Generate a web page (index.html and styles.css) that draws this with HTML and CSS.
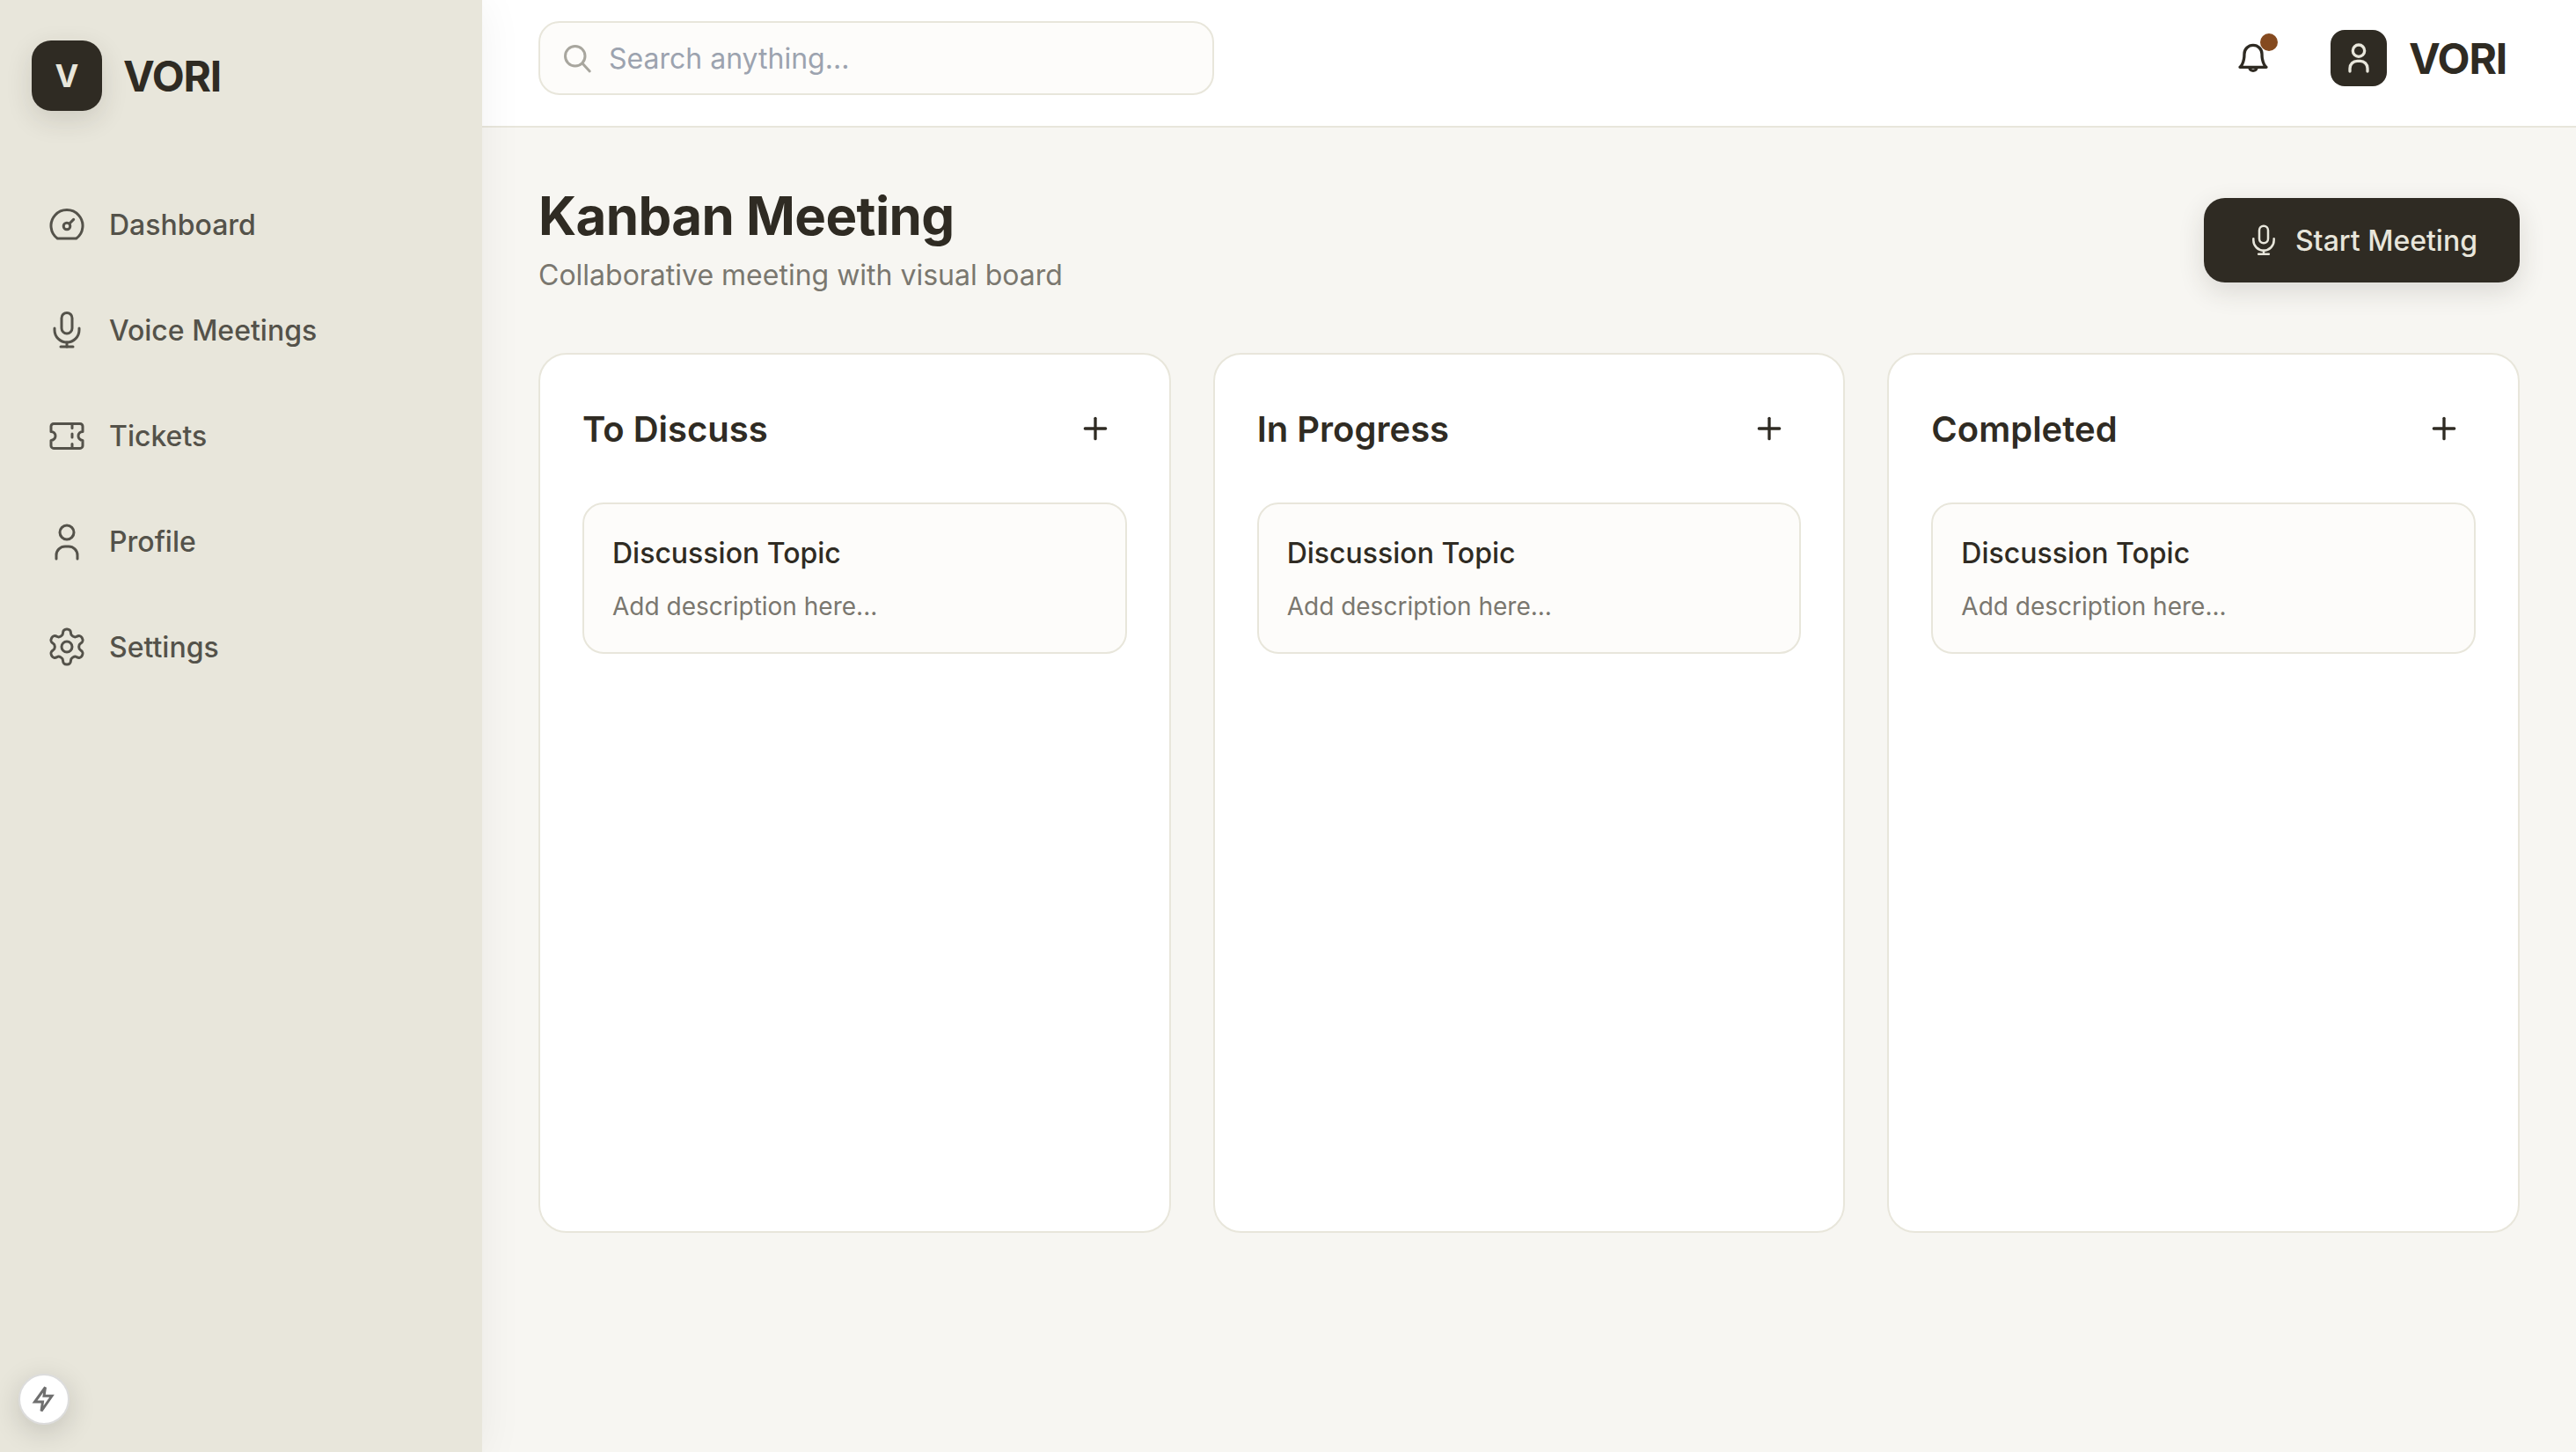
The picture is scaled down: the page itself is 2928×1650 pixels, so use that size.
FILE: index.html
```html
<!DOCTYPE html>
<html lang="en">
<head>
    <meta charset="UTF-8">
    <meta name="viewport" content="width=device-width, initial-scale=1.0">
    <title>Kanban Meeting</title>
    <link rel="stylesheet" href="styles.css">
</head>
<body>

    <aside class="sidebar">
        <div class="brand">
            <div class="brand-mark">V</div>
            <span class="brand-name">VORI</span>
        </div>
        <nav class="nav">
            <a class="nav-item" href="#">
                <svg class="nav-icon" viewBox="0 0 24 24"><path d="M6.67 20A9 9 0 1 1 17.33 20Z"/><circle cx="12" cy="13" r="1.9"/><path d="M13.4 11.6 15.8 9.2"/></svg>
                Dashboard
            </a>
            <a class="nav-item" href="#">
                <svg class="nav-icon" viewBox="0 0 24 24"><rect x="9" y="2.2" width="6" height="11.8" rx="3"/><path d="M5 11v1a7 7 0 0 0 14 0v-1"/><path d="M12 19v2.5"/><path d="M8.5 21.5h7"/></svg>
                Voice Meetings
            </a>
            <a class="nav-item" href="#">
                <svg class="nav-icon" viewBox="0 0 24 24"><path d="M4.5 5.2h15A1.5 1.5 0 0 1 21 6.700v3a2.500 2.500 0 0 0 0 5v3a1.500 1.500 0 0 1-1.500 1.500h-15A1.500 1.500 0 0 1 3 17.700v-3a2.500 2.500 0 0 0 0-5v-3a1.500 1.500 0 0 1 1.500-1.500Z"/><path d="M15 5.200v2.500"/><path d="M15 11v2"/><path d="M15 16.700v2.500"/></svg>
                Tickets
            </a>
            <a class="nav-item" href="#">
                <svg class="nav-icon" viewBox="0 0 24 24"><circle cx="12" cy="7" r="4"/><path d="M6 22v-2a5 5 0 0 1 5-5h2a5 5 0 0 1 5 5v2"/></svg>
                Profile
            </a>
            <a class="nav-item" href="#">
                <svg class="nav-icon" viewBox="0 0 24 24"><path d="M12.220 2h-.44a2 2 0 0 0-2 2v.18a2 2 0 0 1-1 1.730l-.43.25a2 2 0 0 1-2 0l-.15-.08a2 2 0 0 0-2.730.73l-.22.38a2 2 0 0 0 .73 2.730l.15.1a2 2 0 0 1 1 1.720v.51a2 2 0 0 1-1 1.740l-.15.09a2 2 0 0 0-.73 2.730l.22.38a2 2 0 0 0 2.730.73l.15-.08a2 2 0 0 1 2 0l.43.25a2 2 0 0 1 1 1.730V20a2 2 0 0 0 2 2h.44a2 2 0 0 0 2-2v-.18a2 2 0 0 1 1-1.730l.43-.25a2 2 0 0 1 2 0l.15.08a2 2 0 0 0 2.730-.73l.22-.39a2 2 0 0 0-.73-2.730l-.15-.08a2 2 0 0 1-1-1.740v-.5a2 2 0 0 1 1-1.740l.15-.09a2 2 0 0 0 .73-2.730l-.22-.38a2 2 0 0 0-2.730-.73l-.15.08a2 2 0 0 1-2 0l-.43-.25a2 2 0 0 1-1-1.730V4a2 2 0 0 0-2-2z"/><circle cx="12" cy="12" r="3"/></svg>
                Settings
            </a>
        </nav>
    </aside>

    <div class="dev-badge">
        <svg class="dev-icon" viewBox="0 0 24 24"><path d="M13 3 5 14h6l-1 7 8-11.500h-6z"/></svg>
    </div>

    <div class="page">
        <header class="topbar">
            <div class="search">
                <svg class="search-icon" viewBox="0 0 24 24"><circle cx="10.500" cy="10.500" r="7.500"/><path d="m16 16 5.500 6"/></svg>
                <span class="search-text">Search anything...</span>
            </div>
            <div class="topbar-right">
                <div class="bell">
                    <svg class="bell-icon" viewBox="0 0 24 24"><path d="M6 8a6 6 0 0 1 12 0c0 7 3 9 3 9H3s3-2 3-9"/><path d="M9.500 17.500a2.600 2.600 0 0 0 5 0"/></svg>
                    <span class="bell-dot"></span>
                </div>
                <div class="user">
                    <div class="avatar">
                        <svg class="avatar-icon" viewBox="0 0 24 24"><circle cx="12" cy="7" r="4"/><path d="M6 21v-2a5 5 0 0 1 5-5h2a5 5 0 0 1 5 5v2"/></svg>
                    </div>
                    <span class="user-name">VORI</span>
                </div>
            </div>
        </header>

        <main class="content">
            <div class="title-row">
                <div>
                    <h1>Kanban Meeting</h1>
                    <p class="subtitle">Collaborative meeting with visual board</p>
                </div>
                <button class="start-btn">
                    <svg class="start-icon" viewBox="0 0 24 24"><rect x="9" y="2.200" width="6" height="11.800" rx="3"/><path d="M5 11v1a7 7 0 0 0 14 0v-1"/><path d="M12 19v2.500"/><path d="M8.500 21.500h7"/></svg>
                    Start Meeting
                </button>
            </div>

            <section class="board">
                <div class="column">
                    <div class="column-head">
                        <h2>To Discuss</h2>
                        <button class="add-btn"><svg class="add-icon" viewBox="0 0 24 24"><path d="M5 12h14"/><path d="M12 5v14"/></svg></button>
                    </div>
                    <div class="topic">
                        <h3>Discussion Topic</h3>
                        <p>Add description here...</p>
                    </div>
                </div>
                <div class="column">
                    <div class="column-head">
                        <h2>In Progress</h2>
                        <button class="add-btn"><svg class="add-icon" viewBox="0 0 24 24"><path d="M5 12h14"/><path d="M12 5v14"/></svg></button>
                    </div>
                    <div class="topic">
                        <h3>Discussion Topic</h3>
                        <p>Add description here...</p>
                    </div>
                </div>
                <div class="column">
                    <div class="column-head">
                        <h2>Completed</h2>
                        <button class="add-btn"><svg class="add-icon" viewBox="0 0 24 24"><path d="M5 12h14"/><path d="M12 5v14"/></svg></button>
                    </div>
                    <div class="topic">
                        <h3>Discussion Topic</h3>
                        <p>Add description here...</p>
                    </div>
                </div>
            </section>
        </main>
    </div>

</body>
</html>
```

FILE: styles.css
```css
* {
    box-sizing: border-box;
}

html, body {
    height: 100%;
}

body {
    margin: 0;
    display: flex;
    overflow: hidden;
    font-family: Inter, "Liberation Sans", sans-serif;
    background-color: #f7f6f2;
    color: #2f2b23;
}

svg {
    fill: none;
    stroke: currentColor;
    stroke-width: 1.5;
    stroke-linecap: round;
    stroke-linejoin: round;
    flex-shrink: 0;
}

.sidebar {
    width: 548px;
    flex-shrink: 0;
    padding: 46px 24px 0 36px;
    background-color: #e8e6db;
    box-shadow: 0 4px 48px rgba(0, 0, 0, 0.06);
    position: relative;
    z-index: 2;
}

.brand {
    display: flex;
    align-items: center;
    gap: 24px;
}

.brand-mark {
    width: 80px;
    height: 80px;
    border-radius: 22px;
    display: flex;
    align-items: center;
    justify-content: center;
    background-color: #2f2b23;
    color: #e8e6db;
    font-size: 36px;
    font-weight: 700;
    box-shadow: 0 10px 30px rgba(47, 43, 35, 0.14);
}

.brand-name, .user-name {
    font-size: 48px;
    font-weight: 700;
    letter-spacing: -1.2px;
    color: #2f2b23;
}

.nav {
    display: flex;
    flex-direction: column;
    gap: 24px;
    margin-top: 81px;
    margin-left: -12px;
}

.nav-item {
    display: flex;
    align-items: center;
    gap: 24px;
    padding: 24px 28px;
    font-size: 32px;
    font-weight: 500;
    color: #54524a;
    text-decoration: none;
}

.nav-icon {
    width: 48px;
    height: 48px;
}

.dev-badge {
    position: fixed;
    left: 21px;
    bottom: 31px;
    z-index: 3;
    width: 58px;
    height: 58px;
    border-radius: 50%;
    border: 2px solid #dcdcdc;
    background-color: #fff;
    display: flex;
    align-items: center;
    justify-content: center;
    color: #6f6f6f;
    box-shadow: 0 8px 32px rgba(0, 0, 0, 0.16);
}

.dev-icon {
    width: 36px;
    height: 36px;
    stroke-width: 2;
    stroke-linecap: butt;
    stroke-linejoin: miter;
}

.page {
    flex: 1;
    min-width: 0;
    display: flex;
    flex-direction: column;
}

.topbar {
    height: 145px;
    padding: 24px 64px 0;
    display: flex;
    justify-content: space-between;
    align-items: flex-start;
    background-color: #fff;
    border-bottom: 2px solid #e8e6db;
}

.search {
    width: 768px;
    height: 84px;
    padding: 0 24px;
    display: flex;
    align-items: center;
    gap: 18px;
    background-color: #fdfcfa;
    border: 2px solid #e8e6db;
    border-radius: 24px;
}

.search-icon {
    width: 36px;
    height: 36px;
    color: #a8a69e;
    stroke-width: 2;
}

.search-text {
    font-size: 32px;
    color: #9ca3af;
}

.topbar-right {
    display: flex;
    align-items: center;
    gap: 68px;
    padding-top: 10px;
    padding-right: 15px;
}

.bell {
    width: 40px;
    height: 40px;
    position: relative;
    color: #2f2b23;
    top: 2px;
}

.bell-icon {
    width: 40px;
    height: 40px;
    stroke-width: 2;
}

.bell-dot {
    position: absolute;
    top: -10px;
    right: -8px;
    width: 20px;
    height: 20px;
    border-radius: 50%;
    background-color: #854a1f;
}

.user {
    display: flex;
    align-items: center;
    gap: 25px;
}

.avatar {
    width: 64px;
    height: 64px;
    border-radius: 16px;
    display: flex;
    align-items: center;
    justify-content: center;
    background-color: #2f2b23;
    color: #e8e6db;
}

.avatar-icon {
    width: 40px;
    height: 40px;
    stroke-width: 2;
}

.content {
    padding: 64px 64px 0;
}

.title-row {
    display: flex;
    justify-content: space-between;
    align-items: center;
    margin-bottom: 64px;
}

h1 {
    margin: 0 0 8px;
    font-size: 60px;
    line-height: 72px;
    font-weight: 700;
    letter-spacing: -0.6px;
    color: #2f2b23;
}

.subtitle {
    margin: 0;
    font-size: 32px;
    line-height: 48px;
    color: #7a776f;
}

.start-btn {
    height: 96px;
    padding: 0 48px;
    display: flex;
    align-items: center;
    gap: 16px;
    border: none;
    border-radius: 24px;
    background-color: #2f2b23;
    color: #e8e6db;
    font-family: inherit;
    font-size: 32px;
    font-weight: 500;
    box-shadow: 0 10px 30px rgba(47, 43, 35, 0.14);
}

.start-icon {
    width: 40px;
    height: 40px;
}

.board {
    display: flex;
    gap: 48px;
    height: 1000px;
}

.column {
    flex: 1;
    min-width: 0;
    padding: 48px;
    background-color: #fff;
    border: 2px solid #e8e6db;
    border-radius: 32px;
}

.column-head {
    display: flex;
    align-items: center;
    justify-content: space-between;
    margin-bottom: 48px;
}

h2 {
    margin: 0;
    font-size: 40px;
    font-weight: 600;
    color: #2f2b23;
}

.add-btn {
    width: 72px;
    height: 72px;
    padding: 16px;
    border: none;
    background: none;
    color: #2f2b23;
}

.add-icon {
    display: block;
    width: 40px;
    height: 40px;
    stroke-width: 2;
}

.topic {
    padding: 32px;
    background-color: #fdfcfa;
    border: 2px solid #e8e6db;
    border-radius: 24px;
}

.topic h3 {
    margin: 0 0 16px;
    font-size: 32px;
    line-height: 48px;
    font-weight: 500;
    color: #2f2b23;
}

.topic p {
    margin: 0;
    font-size: 28px;
    line-height: 40px;
    color: #7a776f;
}
```
